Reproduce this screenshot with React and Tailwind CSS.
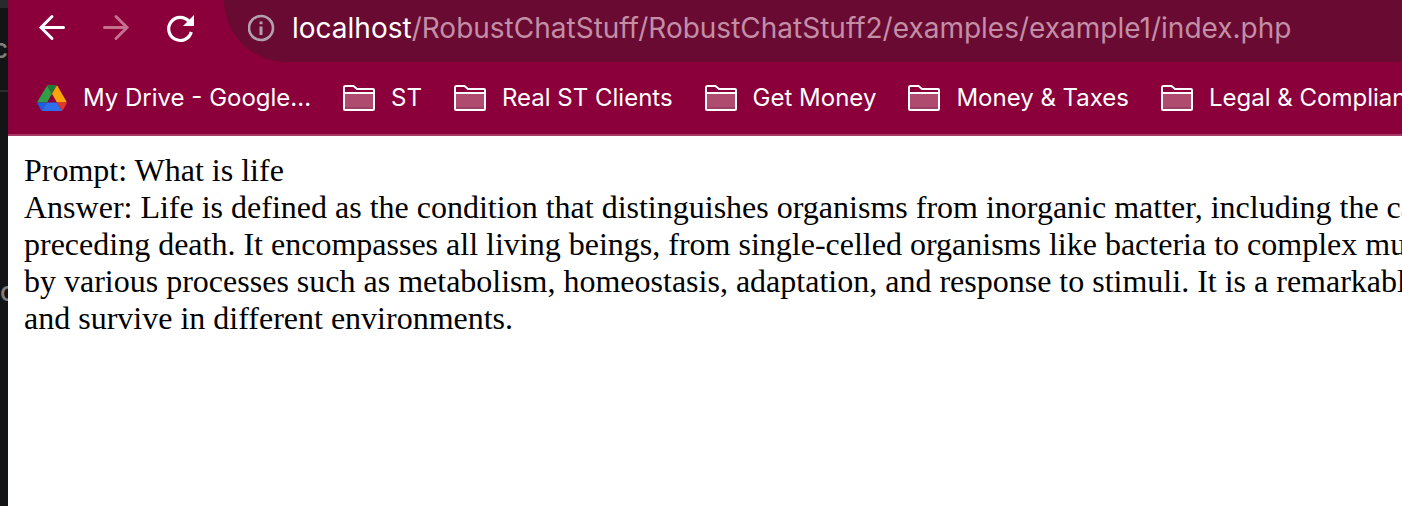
const folders = ["ST", "Real ST Clients", "Get Money", "Money & Taxes", "Legal & Compliance"];

function FolderIcon() {
  return (
    <svg viewBox="0 0 32 26" className="h-[26px] w-8 shrink-0" fill="none" aria-hidden="true">
      <rect x="2" y="9" width="28" height="15" fill="#b04b70" />
      <rect x="2" y="22" width="28" height="2" fill="#9c4068" />
      <path d="M1 24V2.5Q1 1 2.5 1H10.5L14 4H30Q31 4 31 5V24Q31 25 30 25H2Q1 25 1 24ZM1 8H31" stroke="#fff" strokeWidth="2" />
    </svg>
  );
}

function DriveIcon() {
  return (
    <svg viewBox="0 0 30 26" className="h-[26px] w-[30px] shrink-0" aria-hidden="true">
      <path d="M10.2 0.4L0.8 16Q0.3 17 0.3 17.5H10L15 8.8Z" fill="#2f9e44" />
      <path d="M10.2 0.4Q10.8 0 11.6 0H18.4Q19.2 0 19.8 0.4L15 8.8Z" fill="#1e7a35" />
      <path d="M19.8 0.4Q20.3 0.8 20.6 1.3L29.2 16Q29.7 17 29.7 17.5H20L15 8.8Z" fill="#fba30a" />
      <path d="M0.3 17.5H10L5 26Q4.4 25.6 4 25L0.8 19.3Q0.3 18.4 0.3 17.5Z" fill="#1c5fe0" />
      <path d="M10 17.5H20L25 25.8Q24.4 26 23.6 26H6.4Q5.6 26 5 25.8Z" fill="#2f6fed" />
      <path d="M20 17.5H29.7Q29.7 18.4 29.2 19.3L26 25Q25.6 25.6 25 25.8Z" fill="#e3352b" />
    </svg>
  );
}

export default function App() {
  return (
    <div className="flex h-screen overflow-hidden bg-white">
      <aside className="flex w-2 shrink-0 flex-col overflow-hidden bg-[#131416] font-['Inter',sans-serif] text-[26px] font-medium leading-8 text-[#808080]">
        <div className="h-2 shrink-0 bg-[#292a2d]" />
        <div className="flex h-[84px] shrink-0 items-center justify-end border-b-2 border-[#2b2b2e]">c</div>
        <div className="flex h-[400px] shrink-0 items-center justify-start">o</div>
      </aside>
      <div className="flex min-w-0 flex-1 flex-col">
        <header className="shrink-0 overflow-hidden border-b-2 border-[#a63a66] bg-[#8b003b] font-['Inter',sans-serif] text-white">
          <div className="flex h-[62px]">
            <nav className="flex h-14 w-[216px] shrink-0 items-center gap-8 pl-7" aria-label="History">
              <button type="button" aria-label="Back" className="size-8">
                <svg viewBox="0 0 32 32" className="size-8" fill="none" stroke="currentColor" strokeWidth="3" strokeLinecap="round">
                  <path d="M27.5 15.5H5M16 4.5L5 15.5L16 26.5" />
                </svg>
              </button>
              <button type="button" aria-label="Forward" disabled className="size-8 text-[#c5708f]">
                <svg viewBox="0 0 32 32" className="size-8" fill="none" stroke="currentColor" strokeWidth="3" strokeLinecap="round">
                  <path d="M4.5 15.5H27M16 4.5L27 15.5L16 26.5" />
                </svg>
              </button>
              <button type="button" aria-label="Reload" className="size-8">
                <svg viewBox="0 0 32 32" className="size-8" fill="none">
                  <path d="M25 9.5A11.5 11.5 0 1 0 27.3 20" stroke="currentColor" strokeWidth="3.2" />
                  <path d="M30 3V14H19Z" fill="currentColor" />
                </svg>
              </button>
            </nav>
            <div className="flex min-w-0 flex-1 rounded-bl-full bg-[#690a32]">
              <div className="flex h-14 min-w-0 flex-1 items-center gap-4 pl-6">
                <svg viewBox="0 0 28 28" className="size-7 shrink-0" fill="none" aria-hidden="true">
                  <circle cx="13" cy="14" r="12" stroke="#b3a0ad" strokeWidth="2.6" />
                  <path d="M13 12.5V21M13 7.5V10.3" stroke="#b3a0ad" strokeWidth="3" />
                </svg>
                <a href="#page" className="whitespace-nowrap text-[28px] leading-8 text-[#c38ea6]">
                  <span className="text-white">localhost</span>/RobustChatStuff/RobustChatStuff2/examples/example1/index.php
                </a>
              </div>
            </div>
          </div>
          <nav className="flex h-[72px] items-center gap-8 pl-[29px] text-2xl" aria-label="Bookmarks">
            <a href="#drive" className="flex shrink-0 items-center gap-4 whitespace-nowrap">
              <DriveIcon />
              My Drive - Google...
            </a>
            {folders.map((name) => (
              <button key={name} type="button" className="flex shrink-0 items-center gap-4 whitespace-nowrap">
                <FolderIcon />
                {name}
              </button>
            ))}
          </nav>
        </header>
        <main id="page" className="flex-1 overflow-hidden whitespace-nowrap px-4 py-4 font-['Liberation_Serif',serif] text-[32px] leading-[37px] text-black">
          <p>Prompt: What is life</p>
          <p>
            Answer: Life is defined as the condition that distinguishes organisms from inorganic matter, including the capacity
            <br />
            preceding death. It encompasses all living beings, from single-celled organisms like bacteria to complex multicellular
            <br />
            by various processes such as metabolism, homeostasis, adaptation, and response to stimuli. It is a remarkable
            <br />
            and survive in different environments.
          </p>
        </main>
      </div>
    </div>
  );
}
